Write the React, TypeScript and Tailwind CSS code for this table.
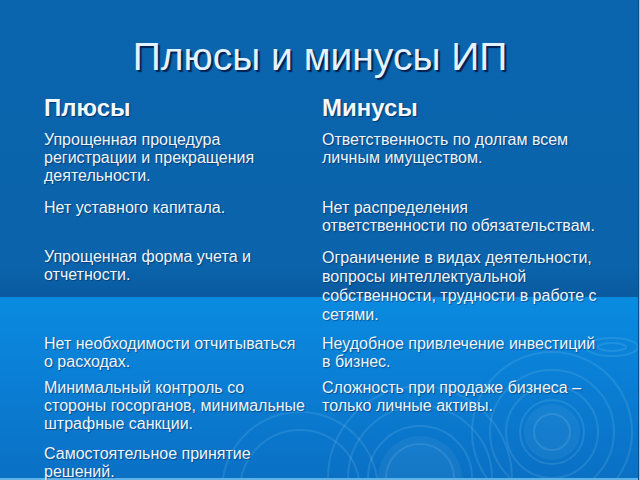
import React from "react";

const rows: { h: string; left: string[]; right: string[]; rightLead?: string }[] = [
  { h: "h-[68px]", left: ["Упрощенная процедура", "регистрации и прекращения", "деятельности."], right: ["Ответственность по долгам всем", "личным имуществом."] },
  { h: "h-[49px]", left: ["Нет уставного капитала."], right: ["Нет распределения", "ответственности по обязательствам."] },
  { h: "h-[87px]", left: ["Упрощенная форма учета и", "отчетности."], right: ["Ограничение в видах деятельности,", "вопросы интеллектуальной", "собственности, трудности в работе с", "сетями."], rightLead: "leading-[19px]" },
  { h: "h-[44px]", left: ["Нет необходимости отчитываться", "о расходах."], right: ["Неудобное привлечение инвестиций", "в бизнес."] },
  { h: "h-[66px]", left: ["Минимальный контроль со", "стороны госорганов, минимальные", "штрафные санкции."], right: ["Сложность при продаже бизнеса –", "только личные активы."] },
  { h: "h-[36px]", left: ["Самостоятельное принятие", "решений."], right: [] },
];

function Cell({ lines, lead }: { lines: string[]; lead?: string }) {
  return (
    <div className={`flex flex-col text-[16px] ${lead ?? "leading-[18px]"} text-[#eef4fb] [text-shadow:1px_1px_1px_rgba(0,20,60,0.45)]`}>
      {lines.map((l, i) => (
        <span key={i} className="whitespace-nowrap">{l}</span>
      ))}
    </div>
  );
}

export default function App() {
  return (
    <div className="relative w-[640px] h-[480px] overflow-hidden font-['Liberation_Sans',Arial,sans-serif]">
      <div className="absolute inset-0 flex flex-col">
        <div className="h-[297px] bg-[linear-gradient(to_bottom,#0b65ae_0%,#0a63ab_90%,#0a5a9f_100%)]" />
        <div className="flex-1 relative bg-[linear-gradient(to_bottom,#0a8be0_0%,#0a80d6_40%,#0a70c4_100%)]">
          <svg className="absolute inset-0" width="640" height="183" viewBox="0 297 640 183">
            <g fill="none" stroke="rgba(200,235,255,0.12)" strokeWidth="2">
              <circle cx="552" cy="432" r="18" />
              <circle cx="552" cy="432" r="32" />
              <circle cx="552" cy="432" r="46" />
              <circle cx="552" cy="432" r="62" />
              <circle cx="552" cy="432" r="80" />
              <circle cx="420" cy="478" r="34" />
              <circle cx="420" cy="478" r="52" />
              <circle cx="420" cy="478" r="72" />
              <circle cx="420" cy="478" r="92" />
              <circle cx="300" cy="490" r="60" />
              <circle cx="300" cy="490" r="78" />
              <ellipse cx="612" cy="347" rx="26" ry="9" />
              <ellipse cx="612" cy="347" rx="14" ry="4" />
            </g>
            <g fill="rgba(255,255,255,0.05)">
              <circle cx="552" cy="432" r="28" />
              <circle cx="420" cy="478" r="42" />
            </g>
          </svg>
        </div>
        <div className="absolute left-0 right-0 bottom-0 h-[2px] bg-[#5fb2e6]" />
        <div className="absolute top-0 bottom-0 right-0 w-[2px] flex">
          <div className="w-[1px] bg-[#0a4f8c]" />
          <div className="w-[1px] bg-[#8fcaf0]" />
        </div>
      </div>

      <div className="relative flex flex-col pt-[34px]">
        <h1 className="text-center text-[39px] leading-[45px] font-normal text-[#e4f1ff] [text-shadow:2px_2px_1px_rgba(0,25,70,0.9)]">
          Плюсы и минусы ИП
        </h1>
        <div className="grid grid-cols-[278px_1fr] pl-[44px] mt-[16px]">
          <div className="text-[24px] leading-[26px] font-bold text-[#f4f8ff] [text-shadow:1px_1px_1px_rgba(0,20,60,0.6)]">Плюсы</div>
          <div className="text-[24px] leading-[26px] font-bold text-[#f4f8ff] [text-shadow:1px_1px_1px_rgba(0,20,60,0.6)]">Минусы</div>
        </div>
        <div className="flex flex-col pl-[44px] mt-[10px]">
          {rows.map((r, i) => (
            <div key={i} className={`grid grid-cols-[278px_1fr] ${r.h}`}>
              <Cell lines={r.left} />
              <Cell lines={r.right} lead={r.rightLead} />
            </div>
          ))}
        </div>
      </div>
    </div>
  );
}
